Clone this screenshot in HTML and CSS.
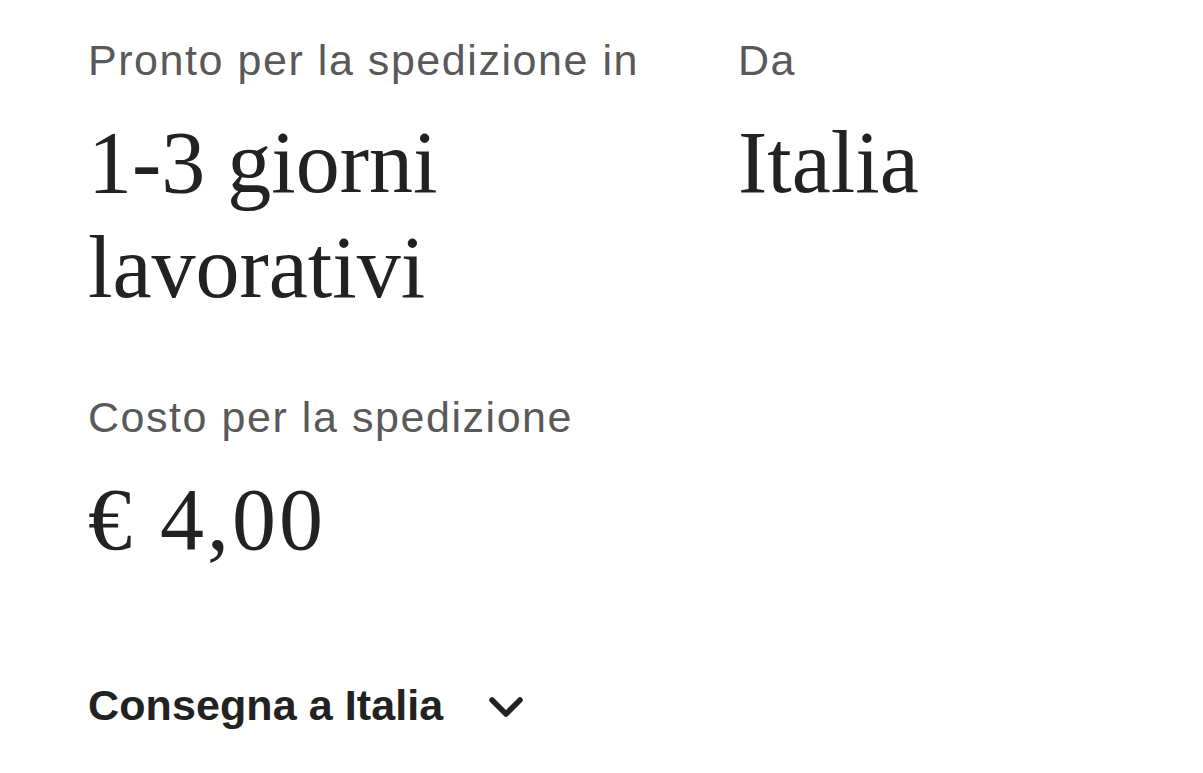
FILE: index.html
```html
<!DOCTYPE html>
<html lang="it">
<head>
  <meta charset="UTF-8">
  <meta name="viewport" content="width=device-width, initial-scale=1.0">
  <title>Spedizione</title>
  <link rel="stylesheet" href="styles.css">
</head>
<body>
  <div class="shipping">
    <div class="info-grid">
      <div class="info-item">
        <p class="info-label">Pronto per la spedizione in</p>
        <p class="info-value">1-3 giorni lavorativi</p>
      </div>
      <div class="info-item">
        <p class="info-label">Da</p>
        <p class="info-value">Italia</p>
      </div>
      <div class="info-item">
        <p class="info-label">Costo per la spedizione</p>
        <p class="info-value price">€ 4,00</p>
      </div>
    </div>
    <button class="deliver-toggle" type="button">
      <span>Consegna a Italia</span>
      <svg class="chevron" width="36" height="24" viewBox="0 0 36 24" aria-hidden="true">
        <path d="M4 5 L18 19 L32 5" fill="none" stroke="#222" stroke-width="5.5" stroke-linecap="round" stroke-linejoin="round"/>
      </svg>
    </button>
  </div>
</body>
</html>
```

FILE: styles.css
```css
body {
  margin: 0;
  background-color: #fff;
  color: #222;
}
.shipping {
  padding: 34px 88px 0 88px;
}
.info-grid {
  display: grid;
  grid-template-columns: 650px 1fr;
  row-gap: 71px;
}
.info-item p {
  margin: 0;
}
.info-label {
  font-family: "Liberation Sans", Arial, sans-serif;
  font-size: 43px;
  line-height: 52px;
  letter-spacing: 1.55px;
  color: #595959;
  margin-bottom: 24px !important;
}
.info-value {
  font-family: "Liberation Serif", "Times New Roman", serif;
  font-size: 88px;
  line-height: 105px;
  color: #222;
  max-width: 480px;
}
.info-value.price {
  letter-spacing: 3px;
}
.deliver-toggle {
  display: flex;
  align-items: center;
  gap: 45px;
  margin-top: 107px;
  padding: 0;
  border: none;
  background: none;
  font-family: "Liberation Sans", Arial, sans-serif;
  font-size: 43px;
  font-weight: bold;
  line-height: 52px;
  letter-spacing: 0.1px;
  color: #222;
  cursor: pointer;
}
.chevron {
  display: block;
  margin-top: 4px;
}
```
